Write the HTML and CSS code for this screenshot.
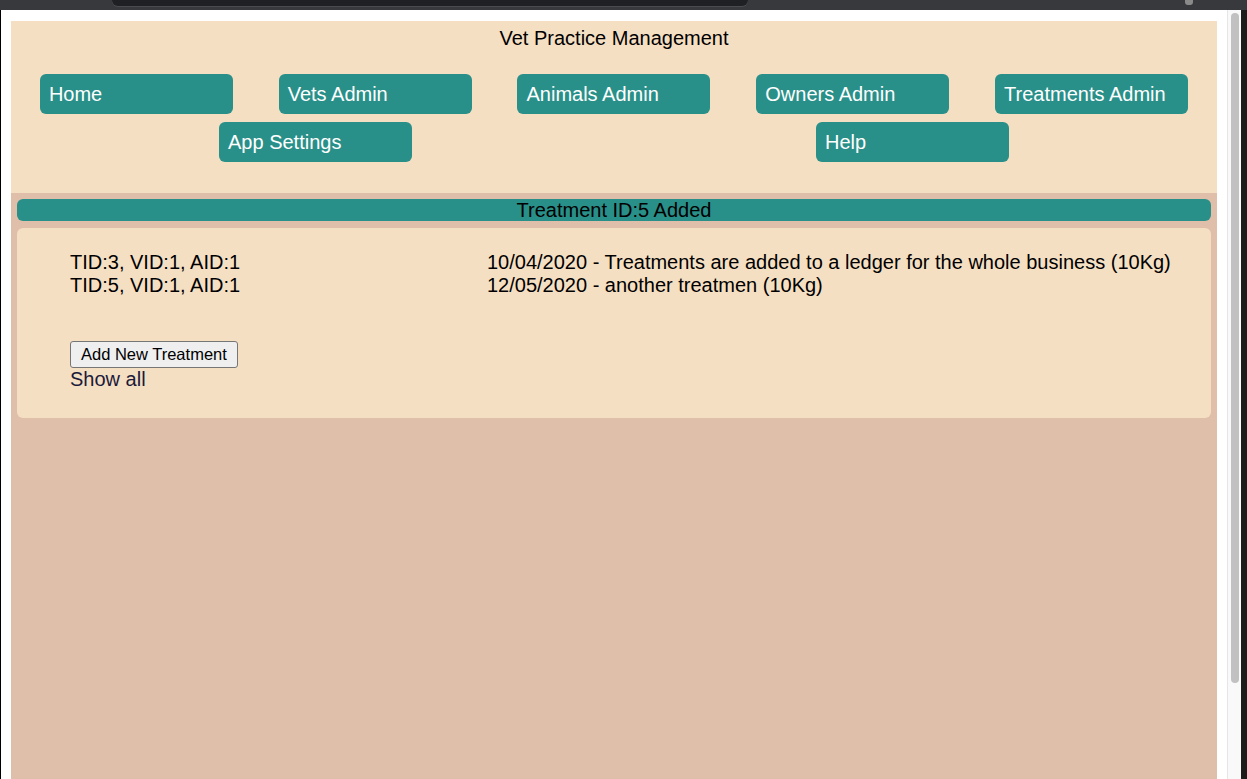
FILE: index.html
```html
<!DOCTYPE html>
<html lang="en">
<head>
<meta charset="utf-8">
<title>Vet Practice Management</title>
<link rel="stylesheet" href="styles.css">
</head>
<body>
<div class="topbar"><div class="tab-pill"></div><div class="top-icon"></div></div>
<div class="window">
  <div class="edge-left"></div>
  <div class="viewport">
    <div class="app">
      <header class="header">
        <div class="title">Vet Practice Management</div>
        <nav class="nav">
          <a class="nav-btn" href="#">Home</a>
          <a class="nav-btn" href="#">Vets Admin</a>
          <a class="nav-btn" href="#">Animals Admin</a>
          <a class="nav-btn" href="#">Owners Admin</a>
          <a class="nav-btn" href="#">Treatments Admin</a>
          <a class="nav-btn" href="#">App Settings</a>
          <a class="nav-btn" href="#">Help</a>
        </nav>
      </header>
      <main class="main">
        <div class="notice">Treatment ID:5 Added</div>
        <section class="card">
          <div class="rows">
            <div class="cell">TID:3, VID:1, AID:1</div>
            <div class="cell">10/04/2020 - Treatments are added to a ledger for the whole business (10Kg)</div>
            <div class="cell">TID:5, VID:1, AID:1</div>
            <div class="cell">12/05/2020 - another treatmen (10Kg)</div>
          </div>
          <button class="add-btn" type="button">Add New Treatment</button>
          <a class="show-all" href="#">Show all</a>
        </section>
      </main>
    </div>
  </div>
  <div class="scrollbar"><div class="thumb"></div></div>
  <div class="edge-right"></div>
</div>
</body>
</html>
```

FILE: styles.css
```css
html, body {
  margin: 0;
  padding: 0;
  height: 100%;
}

body {
  background: #ffffff;
  font-family: "Liberation Sans", Arial, sans-serif;
  overflow: hidden;
}

.topbar {
  height: 10px;
  background: #38393d;
  display: flex;
  position: relative;
}

.tab-pill {
  margin-left: 112px;
  width: 636px;
  height: 6px;
  background: #1f2023;
  border-radius: 0 0 9px 9px;
  box-shadow: 0 1px 0 #4a4b4f;
}

.top-icon {
  position: absolute;
  left: 1185px;
  top: 0;
  width: 8px;
  height: 5px;
  background: #8a8a8a;
  border-radius: 0 0 3px 3px;
}

.window {
  display: flex;
  height: calc(100% - 10px);
}

.edge-left {
  width: 1px;
  background: #000000;
}

.viewport {
  flex: 1;
  padding: 11px 10px 0 10px;
  display: flex;
  flex-direction: column;
  min-width: 0;
}

.app {
  flex: 1;
  display: flex;
  flex-direction: column;
}

.header {
  background: #f5dfc3;
  padding: 7px 6px 31px;
}

.title {
  text-align: center;
  font-size: 20px;
  line-height: 21px;
  color: #000000;
}

.nav {
  margin-top: 25px;
  display: flex;
  flex-wrap: wrap;
  justify-content: space-around;
  row-gap: 8px;
}

.nav-btn {
  box-sizing: border-box;
  width: 193px;
  height: 40px;
  margin: 0 20px;
  line-height: 40px;
  padding-left: 9px;
  background: #298f89;
  color: #ffffff;
  font-size: 20px;
  text-decoration: none;
  border-radius: 6px;
  white-space: nowrap;
}

.main {
  flex: 1;
  background: #dfbfaa;
  padding: 6px 6px 0;
  display: flex;
  flex-direction: column;
  gap: 7px;
}

.notice {
  background: #298f89;
  border-radius: 6px;
  height: 22px;
  line-height: 22px;
  text-align: center;
  font-size: 20px;
  color: #000000;
}

.card {
  background: #f5dfc3;
  border-radius: 6px;
  padding: 23px 30px 27px 53px;
  display: flex;
  flex-direction: column;
  align-items: flex-start;
}

.rows {
  display: grid;
  grid-template-columns: 417px 1fr;
  font-size: 20px;
  line-height: 23px;
  color: #000000;
  width: 100%;
}

.cell {
  white-space: nowrap;
}

.add-btn {
  margin-top: 44px;
  font-family: "Liberation Sans", Arial, sans-serif;
  font-size: 16.5px;
  height: 27px;
  padding: 0 10px;
  background: #efefef;
  border: 1px solid #767676;
  border-radius: 3px;
  color: #000000;
}

.show-all {
  font-size: 20px;
  line-height: 23px;
  color: #1c1a3a;
  text-decoration: none;
}

.scrollbar {
  width: 13px;
  background: #f9f9f9;
  border-left: 1px solid #e6e6e6;
  padding-top: 3px;
}

.thumb {
  margin-left: 3px;
  width: 8px;
  height: 670px;
  background: #c1c1c1;
  border-radius: 4px;
}

.edge-right {
  width: 6px;
  background: #1b1b1b;
}
```
